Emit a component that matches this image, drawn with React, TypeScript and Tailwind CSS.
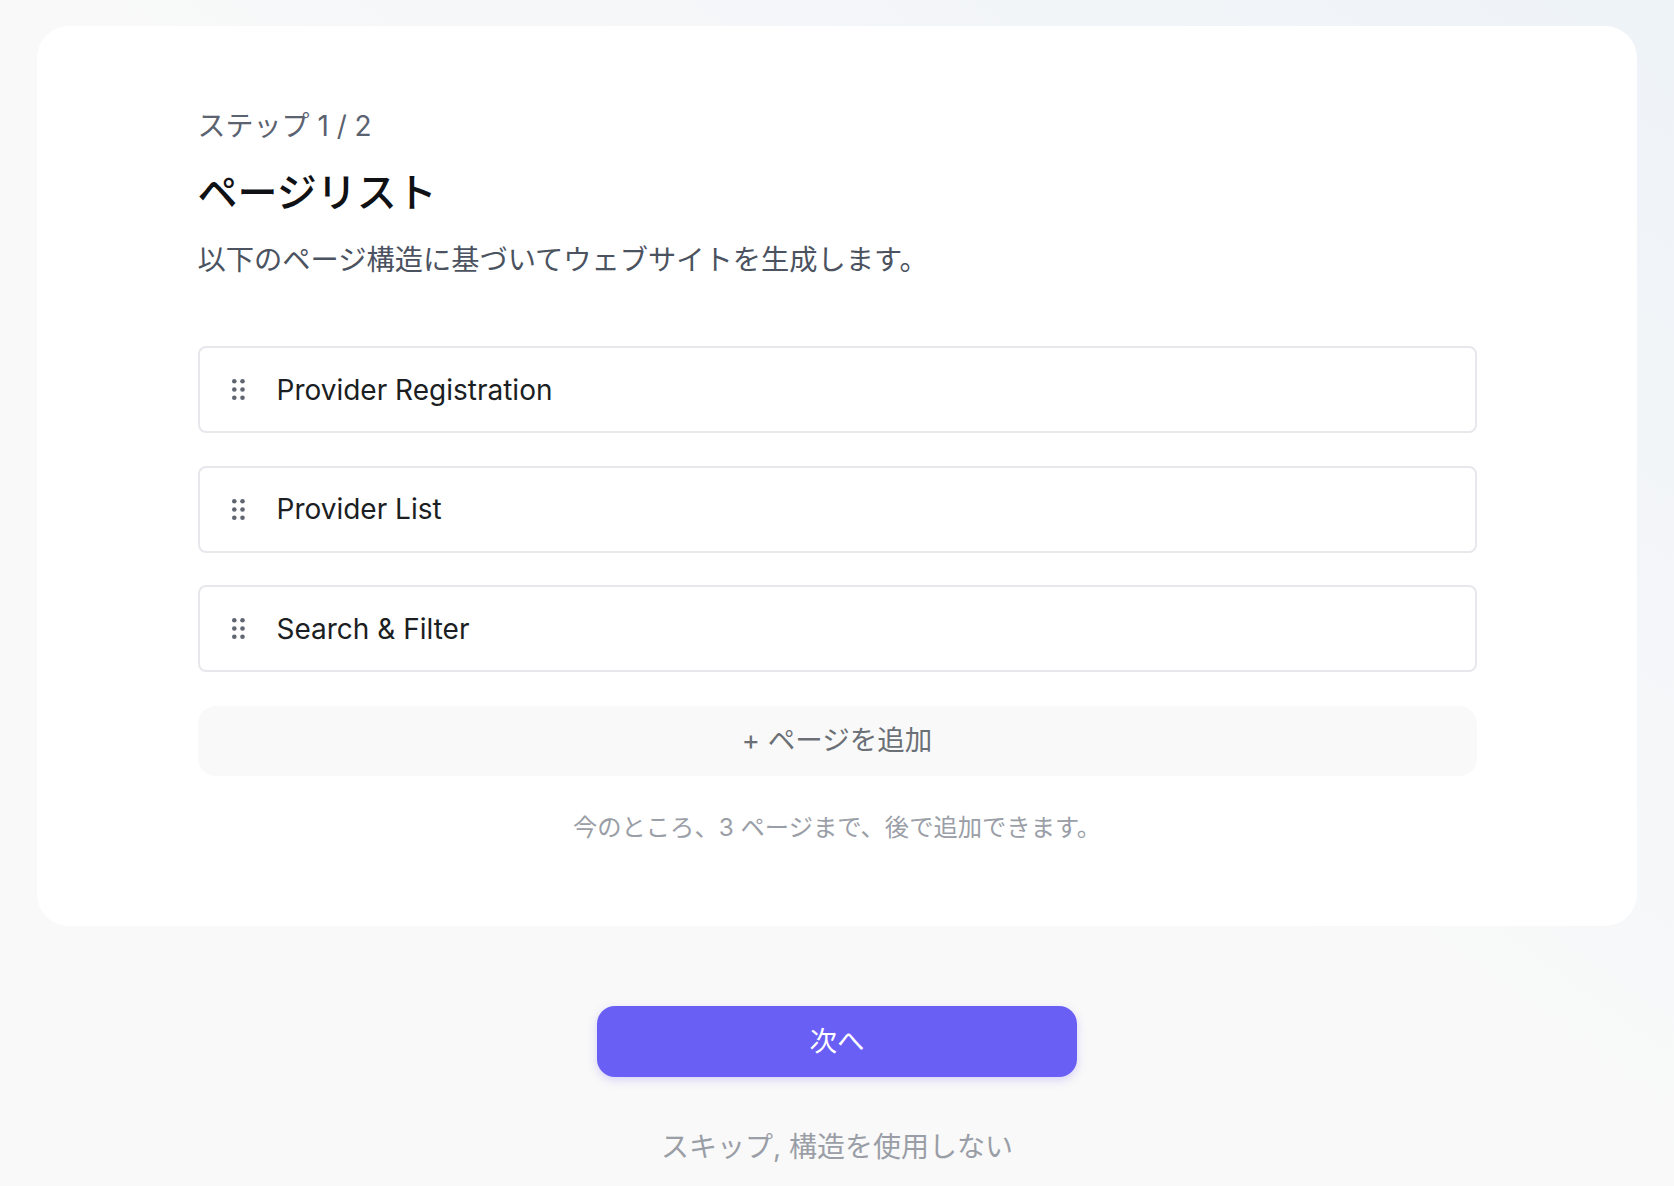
import React from "react";

const FONT = {
  fontFamily: 'Inter, "Noto Sans CJK JP", "Noto Sans", sans-serif',
};

const pages = ["Provider Registration", "Provider List", "Search & Filter"];

function GripDots() {
  return (
    <svg width="13" height="21" viewBox="0 0 13 21" className="shrink-0 text-[#5f6571]" fill="currentColor">
      <circle cx="2.3" cy="2.3" r="2.3" />
      <circle cx="10.5" cy="2.3" r="2.3" />
      <circle cx="2.3" cy="10.5" r="2.3" />
      <circle cx="10.5" cy="10.5" r="2.3" />
      <circle cx="2.3" cy="18.7" r="2.3" />
      <circle cx="10.5" cy="18.7" r="2.3" />
    </svg>
  );
}

export default function App() {
  return (
    <div
      style={FONT}
      className="min-h-screen w-full bg-linear-to-tr from-[#f9f9f9] via-[#f9f9f9] to-[#eef3f8] px-[37px] pt-[26px] pb-[20px]"
    >
      <div className="rounded-[32px] bg-white pt-[80px] pb-[81px]">
        <div className="mx-auto w-[1279px]">
          <p className="text-[28px] leading-[40px] text-[#5b6270]">ステップ 1 / 2</p>
          <h1 className="mt-[21px] text-[40px] leading-[52px] font-medium text-[#0f1115]">ページリスト</h1>
          <p className="mt-[21px] text-[28.25px] leading-[40px] text-[#4b5260]">
            以下のページ構造に基づいてウェブサイトを生成します。
          </p>

          <ul className="mt-[66px] flex flex-col gap-[32.5px]">
            {pages.map((name) => (
              <li
                key={name}
                className="flex h-[87px] items-center gap-[32px] rounded-lg border-2 border-[#e6e8ec] bg-white pl-[32px]"
              >
                <GripDots />
                <span className="text-[28px] leading-none text-[#1b1e22]">{name}</span>
              </li>
            ))}
          </ul>

          <button className="mt-[34px] flex h-[70px] w-full items-center justify-center rounded-[18px] bg-[#f9f9f9] text-[27.5px] text-[#6b6f76]">
            + ページを追加
          </button>

          <p className="mt-[33px] text-center text-[24.3px] leading-[36px] text-[#9a9ea6]">
            今のところ、3 ページまで、後で追加できます。
          </p>
        </div>
      </div>

      <div className="flex flex-col items-center">
        <button className="mt-[80px] flex h-[71px] w-[480px] items-center justify-center rounded-[18px] bg-[#6a5ff5] text-[27.5px] text-white shadow-[0_3px_10px_rgba(106,95,245,0.25)]">
          次へ
        </button>
        <button className="mt-[50px] text-[28px] leading-[40px] text-[#9a9ea6]">
          スキップ, 構造を使用しない
        </button>
      </div>
    </div>
  );
}
